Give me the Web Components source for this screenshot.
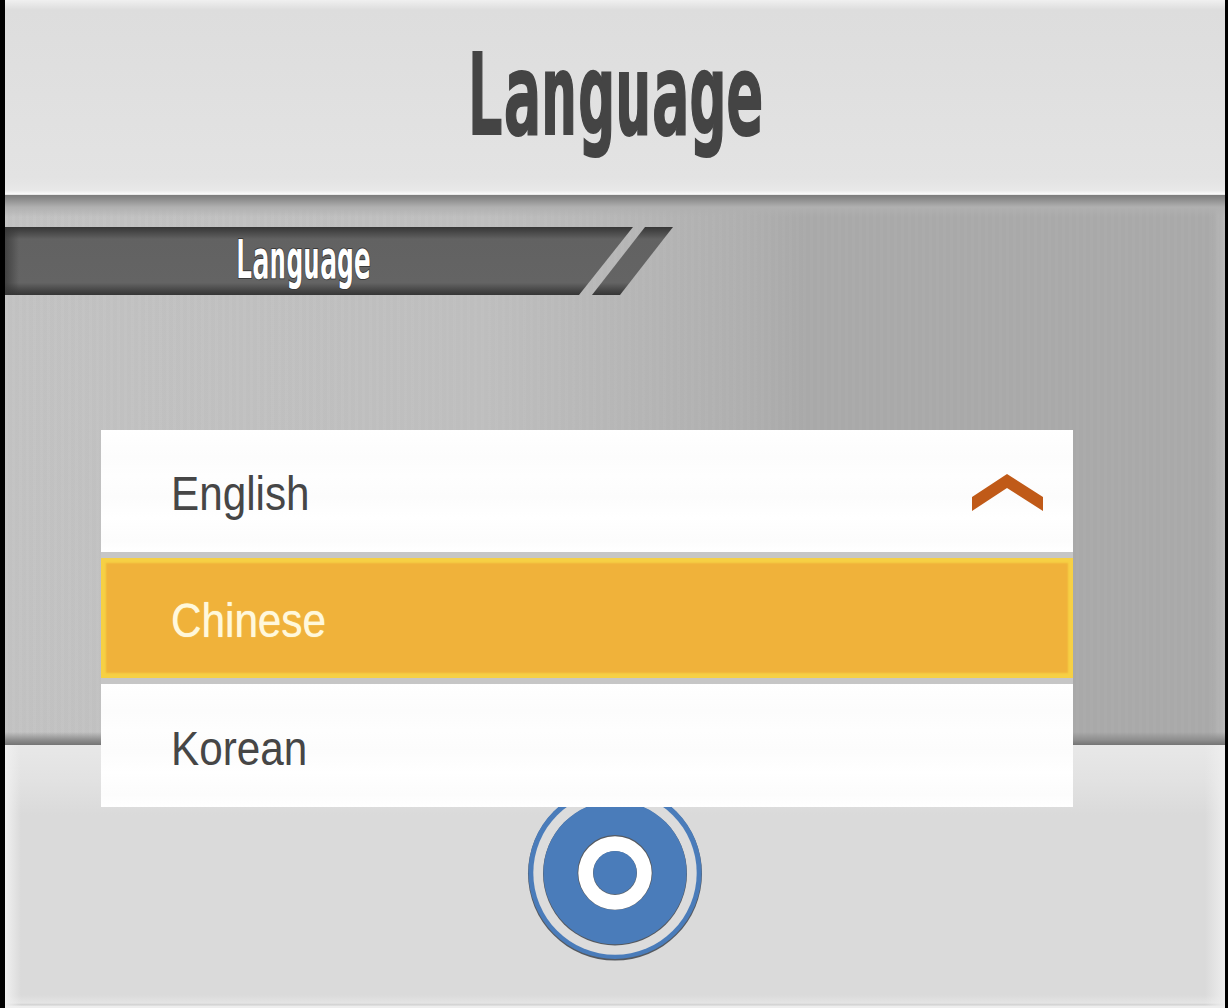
<!DOCTYPE html>
<html>
<head>
<meta charset="utf-8">
<title>Language</title>
<style>
  html, body { margin: 0; height: 100%; background: #000; }
</style>
</head>
<body>
<settings-screen>
  <screen-header slot="header">Language</screen-header>
  <section-ribbon slot="ribbon">Language</section-ribbon>
  <language-menu slot="menu">
    <language-option expanded>English</language-option>
    <language-option selected>Chinese</language-option>
    <language-option>Korean</language-option>
  </language-menu>
  <home-button slot="footer"></home-button>
</settings-screen>

<script>
class SettingsScreen extends HTMLElement {
  connectedCallback() {
    this.attachShadow({ mode: 'open' });
    this.shadowRoot.innerHTML = `
      <style>
        :host {
          display: grid;
          grid-template-rows: 195px 550px 263px;
          position: relative;
          width: 1228px;
          height: 1008px;
          box-sizing: border-box;
          padding: 0 3px 0 5px;
          background: #000;
          overflow: hidden;
        }
        .middle {
          position: relative;
          padding-top: 32px;
          box-sizing: border-box;
          background:
            linear-gradient(180deg, #7c7c7c 0, #8c8c8c 4px, #b0b0b0 12px, rgba(190,190,190,0) 22px),
            linear-gradient(0deg, #747474 0, #8e8e8e 5px, rgba(170,170,170,0) 13px),
            repeating-linear-gradient(90deg, rgba(255,255,255,.012) 0 3px, rgba(0,0,0,.008) 3px 7px),
            linear-gradient(90deg, #c3c3c3 0, #bfbfbf 480px, #b0b0b0 740px, #aaaaaa 800px, #aaaaaa 1205px, #b8b8b8 1220px);
        }
        .footer {
          display: flex;
          justify-content: center;
          align-items: center;
          padding-bottom: 7px;
          box-sizing: border-box;
          background:
            linear-gradient(90deg, #f0f0f0 0, rgba(218,218,218,0) 16px, rgba(218,218,218,0) 1200px, #eeeeee 100%),
            linear-gradient(180deg, #e8e8e8 0, #e2e2e2 35px, #dadada 70px, #dadada 250px, #e4e4e4 258px, #cfcfcf 260px, #eeeeee 261px);
        }
        .menu-layer {
          position: absolute;
          left: 101px;
          top: 430px;
        }
      </style>
      <slot name="header"></slot>
      <div class="middle"><slot name="ribbon"></slot></div>
      <div class="footer"><slot name="footer"></slot></div>
      <div class="menu-layer"><slot name="menu"></slot></div>
    `;
  }
}

class ScreenHeader extends HTMLElement {
  connectedCallback() {
    this.attachShadow({ mode: 'open' });
    this.shadowRoot.innerHTML = `
      <style>
        :host {
          display: flex;
          justify-content: center;
          align-items: center;
          height: 195px;
          box-sizing: border-box;
          padding-bottom: 5px;
          background: linear-gradient(180deg, #f0f0f0 0, #dddddd 10px, #e3e3e3 178px, #e8e8e8 190px, #fbfbfb 194px, #d8d8d8 195px);
          overflow: hidden;
        }
        .title {
          display: block;
          font: 700 112px/1 "DejaVu Sans Mono", monospace;
          color: #444;
          transform: scaleX(.55);
          white-space: nowrap;
          -webkit-text-stroke: 2px #444;
        }
      </style>
      <span class="title"><slot></slot></span>
    `;
  }
}

class SectionRibbon extends HTMLElement {
  connectedCallback() {
    this.attachShadow({ mode: 'open' });
    this.shadowRoot.innerHTML = `
      <style>
        :host {
          display: flex;
          justify-content: center;
          align-items: center;
          position: relative;
          width: 596px;
          height: 68px;
          padding-bottom: 2px;
          box-sizing: border-box;
        }
        svg { position: absolute; left: 0; top: 0; }
        .label {
          position: relative;
          display: block;
          font: 700 54px/1 "DejaVu Sans Mono", monospace;
          color: #fff;
          transform: scaleX(.52);
          white-space: nowrap;
          -webkit-text-stroke: 2px #3a3a3a;
          paint-order: stroke fill;
        }
      </style>
      <svg width="668" height="68" viewBox="0 0 668 68">
        <defs>
          <linearGradient id="edge" x1="0" y1="0" x2="0" y2="1">
            <stop offset="0" stop-color="#363636"/>
            <stop offset=".06" stop-color="#444444"/>
            <stop offset=".18" stop-color="#626262"/>
            <stop offset=".82" stop-color="#646464"/>
            <stop offset=".94" stop-color="#444444"/>
            <stop offset="1" stop-color="#363636"/>
          </linearGradient>
          <linearGradient id="side" x1="0" y1="0" x2="1" y2="0">
            <stop offset="0" stop-color="#363636" stop-opacity=".75"/>
            <stop offset="1" stop-color="#363636" stop-opacity="0"/>
          </linearGradient>
        </defs>
        <path d="M0 0H628L574 68H0Z" fill="url(#edge)"/>
        <path d="M0 0H14V68H0Z" fill="url(#side)"/>
        <path d="M640 0H668L615 68H587Z" fill="url(#edge)"/>
      </svg>
      <span class="label"><slot></slot></span>
    `;
  }
}

class LanguageMenu extends HTMLElement {
  connectedCallback() {
    this.attachShadow({ mode: 'open' });
    this.shadowRoot.innerHTML = `
      <style>
        :host {
          display: flex;
          flex-direction: column;
          width: 972px;
          background: #c6c6c6;
        }
      </style>
      <slot></slot>
    `;
  }
}

class LanguageOption extends HTMLElement {
  connectedCallback() {
    this.attachShadow({ mode: 'open' });
    const arrow = this.hasAttribute('expanded') ? `
      <svg width="72" height="38" viewBox="0 0 72 38">
        <path d="M35 0L71 23V37L35 14L0 37V23Z" fill="#c05a18"/>
      </svg>` : '';
    this.shadowRoot.innerHTML = `
      <style>
        :host {
          display: flex;
          justify-content: space-between;
          align-items: center;
          height: 122px;
          box-sizing: border-box;
          padding: 6px 29px 0 70px;
          background: linear-gradient(180deg, #fff 0, #fcfcfc 22%, #fefefe 38%, #fcfcfc 55%, #fff 72%, #fcfcfc 90%, #fff 100%);
          font: 400 48px/1 "Liberation Sans", sans-serif;
          color: #464646;
        }
        :host(:last-child) { height: 123px; }
        :host([selected]) {
          height: 120px;
          margin: 6px 0;
          background: #f0b23a;
          box-shadow: inset 0 0 2px 5px #f6d044;
          color: #fff8dc;
        }
        .name {
          display: block;
          transform: scaleX(.88);
          transform-origin: left center;
        }
        :host([selected]) .name { text-shadow: 0 0 1px #fff3c0; }
        svg { display: block; margin-bottom: 2px; }
      </style>
      <span class="name"><slot></slot></span>${arrow}
    `;
  }
}

class HomeButton extends HTMLElement {
  connectedCallback() {
    this.attachShadow({ mode: 'open' });
    this.shadowRoot.innerHTML = `
      <style>
        :host { display: block; width: 176px; height: 176px; }
        svg { display: block; }
      </style>
      <svg width="176" height="176" viewBox="0 0 176 176">
        <circle cx="88" cy="88.6" r="87" fill="#55595f"/>
        <circle cx="88" cy="87.4" r="86.6" fill="#4a7cba"/>
        <circle cx="88" cy="88" r="81.7" fill="#dcdcdc"/>
        <circle cx="88" cy="88.5" r="72" fill="#55595f"/>
        <circle cx="88" cy="87.7" r="71.6" fill="#4a7cba"/>
        <circle cx="88" cy="87.5" r="37.5" fill="#55595f"/>
        <circle cx="88" cy="88" r="36.7" fill="#ffffff"/>
        <circle cx="88" cy="88" r="22" fill="#5a6470"/>
        <circle cx="88" cy="87.5" r="21.6" fill="#4a7cba"/>
      </svg>
    `;
  }
}

customElements.define('settings-screen', SettingsScreen);
customElements.define('screen-header', ScreenHeader);
customElements.define('section-ribbon', SectionRibbon);
customElements.define('language-menu', LanguageMenu);
customElements.define('language-option', LanguageOption);
customElements.define('home-button', HomeButton);
</script>
</body>
</html>
